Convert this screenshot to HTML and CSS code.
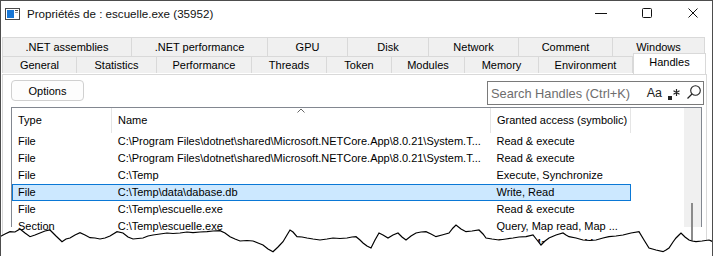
FILE: index.html
```html
<!DOCTYPE html>
<html lang="fr">
<head>
  <meta charset="UTF-8">
  <title>Propriétés de : escuelle.exe (35952)</title>
  <link rel="stylesheet" href="styles.css">
</head>
<body>
<div class="window">
  <div class="titlebar">
    <svg class="appicon" width="16" height="12" viewBox="0 0 16 12">
      <rect x="0.5" y="0.5" width="14" height="11" fill="#fff" stroke="#4a4a4a"/>
      <rect x="2" y="2" width="7" height="8" fill="#1877d6"/>
      <rect x="10" y="2" width="3" height="1" fill="#4a4a4a"/>
      <rect x="10" y="4" width="3" height="1" fill="#9a9a9a"/>
    </svg>
    <span class="title">Propriétés de : escuelle.exe (35952)</span>
    <div class="controls">
      <div class="ctl">
        <svg width="12" height="10" viewBox="0 0 12 10"><line x1="0" y1="5.5" x2="12" y2="5.5" stroke="#111" stroke-width="1"/></svg>
      </div>
      <div class="ctl">
        <svg width="10" height="10" viewBox="0 0 10 10"><rect x="0.5" y="0.5" width="9" height="9" rx="1" fill="none" stroke="#111"/></svg>
      </div>
      <div class="ctl">
        <svg width="10" height="10" viewBox="0 0 10 10"><path d="M0.5 0.5 L9.5 9.5 M9.5 0.5 L0.5 9.5" stroke="#111" stroke-width="1"/></svg>
      </div>
    </div>
  </div>

  <div class="tabrow row1">
    <div class="tab first">.NET assemblies</div>
    <div class="tab">.NET performance</div>
    <div class="tab">GPU</div>
    <div class="tab">Disk</div>
    <div class="tab">Network</div>
    <div class="tab">Comment</div>
    <div class="tab">Windows</div>
  </div>
  <div class="tabrow row2">
    <div class="tab first">General</div>
    <div class="tab">Statistics</div>
    <div class="tab">Performance</div>
    <div class="tab">Threads</div>
    <div class="tab">Token</div>
    <div class="tab">Modules</div>
    <div class="tab">Memory</div>
    <div class="tab">Environment</div>
    <div class="tab active">Handles</div>
  </div>

  <div class="panel">
    <div class="toolbar">
      <button class="btn">Options</button>
      <div class="search">
        <span class="placeholder">Search Handles (Ctrl+K)</span>
        <span class="aa">Aa</span>
        <svg class="regex" width="14" height="14" viewBox="0 0 14 14">
          <rect x="1" y="9" width="4" height="4" fill="#222"/>
          <path d="M9.5 2 V9 M6.5 3.8 L12.5 7.2 M12.5 3.8 L6.5 7.2" stroke="#222" stroke-width="1.2"/>
        </svg>
        <svg class="magnifier" width="16" height="15" viewBox="0 0 16 15">
          <circle cx="9.5" cy="5.5" r="4.8" fill="none" stroke="#222" stroke-width="1.1"/>
          <line x1="6" y1="9" x2="1.5" y2="13.5" stroke="#222" stroke-width="1.3"/>
        </svg>
      </div>
    </div>

    <div class="list">
      <div class="grid">
        <div class="head">
          <div class="cell c1">Type</div>
          <div class="cell c2">Name
            <svg class="sort" width="8" height="5" viewBox="0 0 8 5"><path d="M0.5 4.5 L4 1 L7.5 4.5" fill="none" stroke="#666"/></svg>
          </div>
          <div class="cell c3">Granted access (symbolic)</div>
        </div>
        <div class="row">
          <div class="cell c1">File</div>
          <div class="cell c2">C:\Program Files\dotnet\shared\Microsoft.NETCore.App\8.0.21\System.T...</div>
          <div class="cell c3">Read &amp; execute</div>
        </div>
        <div class="row">
          <div class="cell c1">File</div>
          <div class="cell c2">C:\Program Files\dotnet\shared\Microsoft.NETCore.App\8.0.21\System.T...</div>
          <div class="cell c3">Read &amp; execute</div>
        </div>
        <div class="row">
          <div class="cell c1">File</div>
          <div class="cell c2">C:\Temp</div>
          <div class="cell c3">Execute, Synchronize</div>
        </div>
        <div class="row selected">
          <div class="cell c1">File</div>
          <div class="cell c2">C:\Temp\data\dabase.db</div>
          <div class="cell c3">Write, Read</div>
        </div>
        <div class="row">
          <div class="cell c1">File</div>
          <div class="cell c2">C:\Temp\escuelle.exe</div>
          <div class="cell c3">Read &amp; execute</div>
        </div>
        <div class="row">
          <div class="cell c1">Section</div>
          <div class="cell c2">C:\Temp\escuelle.exe</div>
          <div class="cell c3">Query, Map read, Map ...</div>
        </div>
        <div class="row">
          <div class="cell c1">Section</div>
          <div class="cell c2">C:\Windows</div>
          <div class="cell c3">Query, Map read, Map ...</div>
        </div>
      </div>
      <div class="vscroll"><div class="thumb"></div></div>
    </div>
  </div>

  <!-- torn bottom edge of the screenshot -->
  <svg class="torn" width="713" height="36" viewBox="0 0 713 36">
    <polygon fill="#fff" points="0,16.7 5,14 10,11.7 15,12 20,9 25,13 30,16.7 35,15 40,13 45,11 50,10 56,16 62,21.7 66,19 70,18 75,15 80,12.7 85,15 90,17.7 95,18 100,19 105,18 110,16 117,11.7 123,13 128,17 133,19 138,18.5 143,18 148,16 153,15 160,14 167,13 173,13.5 180,13 187,12 193,12.7 200,12 207,11.7 213,11 220,10.7 225,13 230,16.7 235,19 240,21 247,20.5 253,21 258,23 263,25 268,29 273,31.7 278,27 283,21.7 287,15 290,10 293,12 297,16.7 302,17 307,18 313,19 320,20 327,19 333,18 340,18.5 347,18 352,17 356,16.7 360,20 363,23 367,26 371,28 375,20 379,13 383,15 388,18 393,15 398,13 402,17 406,20 411,16 416,13 421,12 426,11.7 431,14 436,16.7 442,15 449,13 453,8 456,5 461,9 466,11.7 472,11 479,10 483,14 486,18 492,19 499,20 506,19 513,18 519,17 526,16.7 533,15 537,20 541,25 545,21 549,18 556,15 563,13 566,15 569,16.7 576,18 583,20 590,20.5 596,20 603,18 609,16.7 616,16 623,15 631,13 639,11.7 644,20 649,28 656,30 663,31.7 666,30 669,28 673,22 676,18 679,15 681,13 685,17 689,20 692,21 696,21.7 702,21 709,20 713,21.7 713,36 0,36"/>
    <polyline fill="none" stroke="#000" stroke-width="1.2" points="0,16.7 5,14 10,11.7 15,12 20,9 25,13 30,16.7 35,15 40,13 45,11 50,10 56,16 62,21.7 66,19 70,18 75,15 80,12.7 85,15 90,17.7 95,18 100,19 105,18 110,16 117,11.7 123,13 128,17 133,19 138,18.5 143,18 148,16 153,15 160,14 167,13 173,13.5 180,13 187,12 193,12.7 200,12 207,11.7 213,11 220,10.7 225,13 230,16.7 235,19 240,21 247,20.5 253,21 258,23 263,25 268,29 273,31.7 278,27 283,21.7 287,15 290,10 293,12 297,16.7 302,17 307,18 313,19 320,20 327,19 333,18 340,18.5 347,18 352,17 356,16.7 360,20 363,23 367,26 371,28 375,20 379,13 383,15 388,18 393,15 398,13 402,17 406,20 411,16 416,13 421,12 426,11.7 431,14 436,16.7 442,15 449,13 453,8 456,5 461,9 466,11.7 472,11 479,10 483,14 486,18 492,19 499,20 506,19 513,18 519,17 526,16.7 533,15 537,20 541,25 545,21 549,18 556,15 563,13 566,15 569,16.7 576,18 583,20 590,20.5 596,20 603,18 609,16.7 616,16 623,15 631,13 639,11.7 644,20 649,28 656,30 663,31.7 666,30 669,28 673,22 676,18 679,15 681,13 685,17 689,20 692,21 696,21.7 702,21 709,20 713,21.7"/>
  </svg>
</div>
</body>
</html>
```

FILE: styles.css
```css
body {
  margin: 0;
  background: #fff;
  font-family: "Liberation Sans", Arial, sans-serif;
  font-size: 11px;
  color: #000;
}
.window {
  position: relative;
  box-sizing: border-box;
  width: 713px;
  height: 256px;
  border: 1px solid #4d4d4d;
  border-bottom: none;
  background: #fff;
  overflow: hidden;
}

/* title bar */
.titlebar {
  display: flex;
  align-items: center;
  height: 24px;
  padding-left: 4px;
}
.appicon {
  margin-right: 6px;
  margin-top: 1px;
}
.title {
  font-size: 11.6px;
  color: #111;
}
.controls {
  display: flex;
  margin-left: auto;
  margin-right: -4px;
  height: 24px;
}
.ctl {
  width: 46px;
  display: flex;
  align-items: center;
  justify-content: center;
}

/* tabs */
.tabrow {
  display: grid;
  margin-left: 1px;
}
.row1 {
  margin-top: 12px;
  grid-template-columns: 130px 136px 80px 81px 90px 94px 92px;
}
.row2 {
  grid-template-columns: 75px 80px 95px 75px 65px 73px 74px 94px 73px;
}
.tab {
  box-sizing: border-box;
  background: #f0f0f0;
  border-top: 1px solid #d9d9d9;
  border-right: 1px solid #d9d9d9;
  text-align: center;
  white-space: nowrap;
}
.tab.first {
  border-left: 1px solid #d9d9d9;
}
.row1 .tab {
  height: 19px;
  line-height: 18px;
}
.row2 .tab {
  height: 17px;
  line-height: 16px;
}
.row2 .tab.active {
  position: relative;
  z-index: 1;
  background: #fff;
  height: 21px;
  margin-top: -3px;
  line-height: 17px;
  border-left: 1px solid #d9d9d9;
}

/* tab page */
.panel {
  box-sizing: border-box;
  margin-left: 1px;
  width: 705px;
  height: 200px;
  border: 1px solid #d9d9d9;
  background: #fff;
}
.toolbar {
  display: flex;
  justify-content: space-between;
  align-items: flex-start;
  padding: 5px 2px 0 8px;
}
.btn {
  box-sizing: border-box;
  width: 73px;
  height: 21px;
  padding: 0;
  border: 1px solid #d0d0d0;
  border-radius: 4px;
  background: #fdfdfd;
  font-family: inherit;
  font-size: 11px;
  color: #000;
}
.search {
  box-sizing: border-box;
  display: flex;
  align-items: center;
  width: 217px;
  height: 24px;
  margin-top: 1px;
  padding-left: 3px;
  border: 1px solid #7a7a7a;
  background: #fff;
}
.placeholder {
  font-size: 12.8px;
  color: #6d6d6d;
  white-space: nowrap;
}
.aa {
  margin-left: auto;
  font-size: 12.5px;
  color: #222;
}
.regex {
  margin-left: 5px;
  margin-top: 1px;
}
.magnifier {
  margin: 0 1px 1px 5px;
}

/* list view */
.list {
  display: flex;
  box-sizing: border-box;
  width: 691px;
  height: 120px;
  margin: 2px 0 0 8px;
  border: 1px solid #828790;
  border-bottom: none;
}
.grid {
  flex: 1;
}
.vscroll {
  position: relative;
  width: 17px;
  background: #f0f0f0;
}
.thumb {
  position: absolute;
  left: 7px;
  top: 95px;
  width: 2px;
  height: 60px;
  background: #8b8b8b;
}
.head,
.row {
  display: flex;
  box-sizing: border-box;
  width: 619px;
  white-space: nowrap;
}
.head {
  height: 25px;
  line-height: 24px;
}
.head .cell {
  position: relative;
  border-right: 1px solid #e5e5e5;
}
.cell {
  box-sizing: border-box;
  padding-left: 6px;
  overflow: hidden;
}
.c1 { width: 100px; }
.c2 { width: 379px; }
.c3 { width: 140px; }
.sort {
  position: absolute;
  top: 0;
  left: 185px;
}
.row {
  height: 17px;
  line-height: 15px;
  border: 1px solid transparent;
}
.row .cell {
  padding-left: 5px;
}
.row .c3 {
  padding-left: 6px;
}
.row.selected {
  background: #cce8ff;
  border-color: #0a78d6;
}

.torn {
  position: absolute;
  left: -1px;
  bottom: 0;
}
```
